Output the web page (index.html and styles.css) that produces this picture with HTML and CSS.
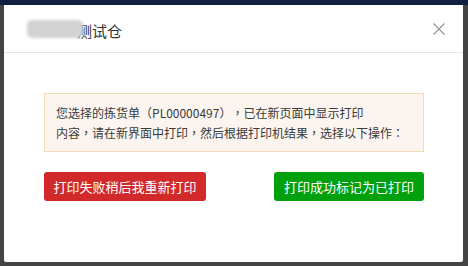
FILE: index.html
```html
<!DOCTYPE html>
<html lang="zh-CN">
<head>
<meta charset="utf-8">
<link rel="stylesheet" href="styles.css">
</head>
<body>
<div class="topbar"></div>
<div class="stage">
  <div class="modal">
    <div class="modal-header">
      <div class="title"><span class="masked"><span class="masked-blur"></span></span><span>测试仓</span></div>
      <svg class="close" width="12" height="12" viewBox="0 0 12 12"><path d="M0.5 0.5 L11.5 11.5 M11.5 0.5 L0.5 11.5" stroke="#9a9a9a" stroke-width="1.4" fill="none"/></svg>
    </div>
    <div class="modal-body">
      <div class="notice">您选择的拣货单<span class="p" lang="zh-TW">（</span>PL00000497<span class="p" lang="zh-TW">）</span><span class="p" lang="zh-TW">，</span>已在新页面中显示打印<br>内容<span class="p" lang="zh-TW">，</span>请在新界面中打印<span class="p" lang="zh-TW">，</span>然后根据打印机结果<span class="p" lang="zh-TW">，</span>选择以下操作<span class="p" lang="zh-TW">：</span></div>
      <div class="actions">
        <button class="btn btn-red">打印失败稍后我重新打印</button>
        <button class="btn btn-green">打印成功标记为已打印</button>
      </div>
    </div>
  </div>
</div>
</body>
</html>
```
FILE: styles.css
```css
html, body {
  margin: 0;
  padding: 0;
}
body {
  width: 468px;
  height: 266px;
  overflow: hidden;
  background: #444444;
  font-family: "Noto Sans CJK SC", "Noto Sans", sans-serif;
}
.topbar {
  height: 5px;
  background: #0f1f3e;
}
.stage {
  padding: 0 5px 0 4px;
}
.modal {
  height: 257px;
  background: #ffffff;
  border-radius: 0 0 2px 2px;
}
.modal-header {
  height: 47px;
  border-bottom: 1px solid #e6e6e6;
  display: flex;
  align-items: center;
  justify-content: space-between;
  padding: 0 18px 0 23px;
}
.title {
  display: flex;
  align-items: center;
  font-size: 15px;
  color: #333333;
  line-height: 20px;
  margin-top: 4px;
}
.masked {
  position: relative;
  display: inline-block;
  width: 50px;
  height: 18px;
  margin-right: 0;
}
.masked-blur {
  position: absolute;
  left: 0;
  top: -2px;
  width: 56px;
  height: 18px;
  background: #d2d2d2;
  border-radius: 5px;
  filter: blur(1.5px);
}
.modal-body {
  padding: 40px 39px 0 40px;
}
.notice {
  background: #fcf5ef;
  border: 1px solid #f2dbb8;
  padding: 9px 11px 8px;
  font-size: 12px;
  line-height: 20px;
  color: #3a3a3a;
  text-spacing-trim: space-all;
}
.p {
  font-family: "Noto Sans CJK TC", sans-serif;
}
.actions {
  display: flex;
  justify-content: space-between;
  margin-top: 20px;
}
.btn {
  height: 29px;
  border: none;
  border-radius: 3px;
  padding: 0;
  white-space: nowrap;
  font-family: "Noto Sans CJK SC", sans-serif;
  font-size: 13px;
  color: #ffffff;
  line-height: 29px;
}
.btn-red {
  background: #d22a2a;
  width: 162px;
}
.btn-green {
  background: #00a00f;
  width: 150px;
}
```
